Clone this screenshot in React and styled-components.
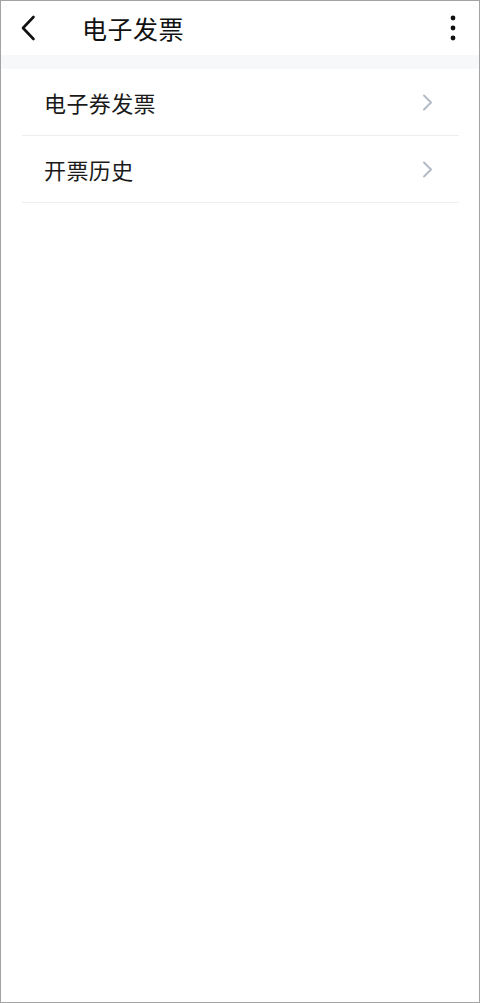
import React from "react";
import styled, { createGlobalStyle } from "styled-components";

const Global = createGlobalStyle`
  html, body { margin: 0; padding: 0; background: #fff; }
  body { font-family: "Noto Sans CJK SC", "Noto Sans", sans-serif; }
`;

const Screen = styled.div`
  box-sizing: border-box;
  width: 480px;
  height: 1003px;
  border: 1px solid #a3a3a3;
  background: #fff;
  display: flex;
  flex-direction: column;
  overflow: hidden;
`;

const Header = styled.header`
  height: 54px;
  display: flex;
  align-items: center;
  padding: 0 23px 0 19px;
  background: #fff;
`;

const IconButton = styled.button`
  border: 0;
  background: none;
  padding: 0;
  display: flex;
  align-items: center;
  justify-content: center;
  width: ${(p) => p.$w}px;
  height: 40px;
  cursor: pointer;
`;

const Title = styled.h1`
  margin: 0 0 0 46px;
  flex: 1;
  font-size: 25px;
  font-weight: 400;
  color: #111;
  letter-spacing: 0.5px;
  line-height: 1;
`;

const Spacer = styled.div`
  height: 14px;
  background: #f7f8fa;
`;

const List = styled.ul`
  list-style: none;
  margin: 0;
  padding: 0 20px 0 21px;
`;

const Row = styled.li`
  height: 66px;
  display: flex;
  align-items: center;
  justify-content: space-between;
  border-bottom: 1px solid #eceef1;
  padding: 0 26px 0 22px;
`;

const RowLabel = styled.span`
  font-size: 22px;
  color: #1a1a1a;
  line-height: 1;
  letter-spacing: 0.4px;
`;

const Back = () => (
  <svg width="16" height="26" viewBox="0 0 16 26">
    <path d="M13.5 2 L3 13 L13.5 24" fill="none" stroke="#111" strokeWidth="2.6" strokeLinecap="round" strokeLinejoin="round" />
  </svg>
);

const More = () => (
  <svg width="6" height="28" viewBox="0 0 6 28">
    <circle cx="3" cy="4" r="2.4" fill="#111" />
    <circle cx="3" cy="14" r="2.4" fill="#111" />
    <circle cx="3" cy="24" r="2.4" fill="#111" />
  </svg>
);

const Chevron = () => (
  <svg width="11" height="17" viewBox="0 0 11 17">
    <path d="M2 1.5 L9 8.5 L2 15.5" fill="none" stroke="#b3bac6" strokeWidth="2" strokeLinecap="round" strokeLinejoin="round" />
  </svg>
);

const items = ["电子券发票", "开票历史"];

export default function App() {
  return (
    <>
      <Global />
      <Screen>
        <Header>
          <IconButton $w={16} aria-label="back"><Back /></IconButton>
          <Title>电子发票</Title>
          <IconButton $w={6} aria-label="more"><More /></IconButton>
        </Header>
        <Spacer />
        <List>
          {items.map((t) => (
            <Row key={t}>
              <RowLabel>{t}</RowLabel>
              <Chevron />
            </Row>
          ))}
        </List>
      </Screen>
    </>
  );
}
